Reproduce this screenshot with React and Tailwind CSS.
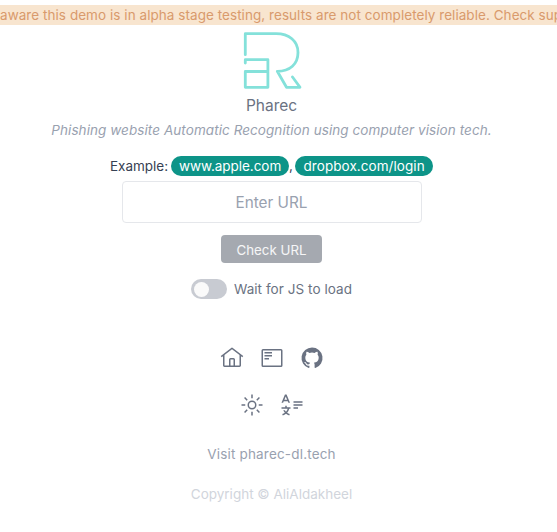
const icons = {
  home: "M16.612 2.214a1.01 1.01 0 0 0-1.242 0L1 13.419l1.243 1.572L4 13.621V26a2.004 2.004 0 0 0 2 2h20a2.004 2.004 0 0 0 2-2V13.63L29.757 15L31 13.428zM18 26h-4v-8h4zm2 0v-8a2.002 2.002 0 0 0-2-2h-4a2.002 2.002 0 0 0-2 2v8H6V12.062l10-7.79l10 7.8V26z",
  article: "M6 16h6v2H6zM6 12h10v2H6zM6 8h10v2H6zM28 4H4a2 2 0 0 0-2 2v20a2 2 0 0 0 2 2h24a2 2 0 0 0 2-2V6a2 2 0 0 0-2-2zM4 26V6h24v20z",
  github: "M16 2a14 14 0 0 0-4.43 27.28c.7.13 1-.3 1-.67v-2.38c-3.89.84-4.71-1.88-4.71-1.88A3.71 3.71 0 0 0 6.24 22.3c-1.27-.86.1-.85.1-.85A2.94 2.94 0 0 1 8.48 22.9a3 3 0 0 0 4.08 1.16a2.93 2.93 0 0 1 .88-1.87c-3.1-.36-6.37-1.56-6.37-6.92a5.4 5.4 0 0 1 1.44-3.76a5 5 0 0 1 .14-3.7s1.17-.38 3.85 1.43a13.3 13.3 0 0 1 7 0c2.67-1.81 3.84-1.43 3.84-1.43a5 5 0 0 1 .14 3.7a5.4 5.4 0 0 1 1.44 3.76c0 5.38-3.27 6.56-6.39 6.91a3.33 3.33 0 0 1 .95 2.59v3.84c0 .46.25.81 1 .67A14 14 0 0 0 16 2",
  sun: "M16 12.005a4 4 0 1 1-4 4a4.005 4.005 0 0 1 4-4m0-2a6 6 0 1 0 6 6a6 6 0 0 0-6-6M5.394 6.813L6.81 5.399l3.505 3.506L8.9 10.319zM2 15.005h5v2H2zm3.394 10.193L8.9 21.692l1.414 1.414l-3.505 3.506zM15 25.005h2v5h-2zm6.687-1.9l1.414-1.414l3.506 3.506l-1.414 1.414zm3.313-8.1h5v2h-5zm-3.313-6.101l3.506-3.506l1.414 1.414l-3.506 3.506zM15 2.005h2v5h-2z",
  translate: "M18 19h6v2h-6zm0-4h12v2H18zm0-4h12v2H18zm-4 10v-2H9v-2H7v2H2v2h8.215a8.6 8.6 0 0 1-2.216 3.977A9.3 9.3 0 0 1 6.552 23H4.333a10.9 10.9 0 0 0 2.145 3.297A14.7 14.7 0 0 1 3 28.127L3.702 30a16.4 16.4 0 0 0 4.29-2.336A16.5 16.5 0 0 0 12.299 30L13 28.127A14.7 14.7 0 0 1 9.523 26.3a10.3 10.3 0 0 0 2.729-5.3zm-2.833-8h2.166L8.75 2H6.583L2 13h2.166L5 11h5.334zM5.833 9l1.833-4.4L9.5 9z",
};

function Icon({ name }) {
  return (
    <svg viewBox="0 0 32 32" className="size-6" fill="currentColor" fillRule="evenodd">
      <path d={icons[name]} />
    </svg>
  );
}

function Logo() {
  return (
    <svg viewBox="0 0 60 60" className="h-[60px] w-[60px]" fill="none" stroke="#84e1da" strokeWidth="2.8" strokeLinecap="round" strokeLinejoin="round">
      <path d="M3.3 24.700V3.700H34C47 3.700 56 11 56 22.500C56 34 48 41.300 35.300 41.300L44.500 57.300H58L50.500 47" />
      <path d="M3.300 33V29.700H25.900V57.300H3.300V41.500H25.900" />
    </svg>
  );
}

export default function App() {
  return (
    <div className="h-[532px] overflow-hidden bg-white pt-[5px] font-['Inter',sans-serif] text-[13.5px] text-gray-500">
      <div className="h-5 w-full overflow-hidden whitespace-nowrap bg-[#f8e5cf] leading-5 text-[#d99a6c]">
        <span className="tracking-[0.05px]">aware this demo is in alpha stage testing, results are not completely reliable. Check sup</span>
      </div>
      <main className="flex w-[543px] flex-col items-center">
        <div className="mt-[5px] ml-px"><Logo /></div>
        <p className="mt-1 text-[15.5px] leading-6">Pharec</p>
        <p className="mt-[2px] whitespace-nowrap italic leading-5 tracking-[0.07px] text-gray-400">Phishing website Automatic Recognition using computer vision tech.</p>
        <div className="mt-4 flex h-5 items-center whitespace-nowrap leading-5 text-gray-700">
          <span className="mr-[3px]">Example:</span>
          <span className="flex h-5 w-[118px] justify-center rounded-full bg-[#0d9488] tracking-[-0.05px] text-white">www.apple.com</span>
          <span className="w-[6px]">,</span>
          <span className="flex h-5 w-[138px] justify-center rounded-full bg-[#0d9488] tracking-[0.06px] text-white">dropbox.com/login</span>
        </div>
        <input placeholder="Enter URL" className="mt-[5px] h-[42px] w-[300px] rounded border border-gray-200 bg-transparent pt-px text-center text-[15.3px] outline-none placeholder:text-gray-400" />
        <button className="mt-3 h-7 w-[101px] rounded bg-[#a5a9b0] pt-px text-[13.3px] leading-5 text-white/90">Check URL</button>
        <div className="mt-4 flex h-5 items-center">
          <span className="flex h-5 w-9 items-center rounded-full bg-[#c8cbd2] pt-px pl-[3px]"><span className="size-[15px] rounded-full bg-[#fafafa]" /></span>
          <span className="ml-[7px] whitespace-nowrap tracking-[0.06px]">Wait for JS to load</span>
        </div>
        <nav className="mt-[47px] flex gap-4"><Icon name="home" /><Icon name="article" /><Icon name="github" /></nav>
        <div className="mt-[23px] flex gap-4"><Icon name="sun" /><Icon name="translate" /></div>
        <p className="mt-[27px] leading-5 tracking-[0.18px] text-gray-400">Visit pharec-dl.tech</p>
        <p className="mt-5 leading-5 text-gray-300">Copyright © AliAldakheel</p>
      </main>
    </div>
  );
}
